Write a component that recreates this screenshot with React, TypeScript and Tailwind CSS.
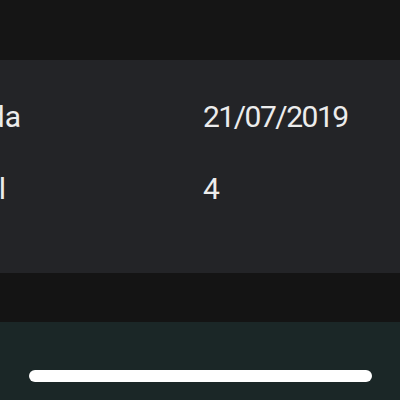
export default function App() {
  const rows = [
    { label: "Salida", value: "21/07/2019" },
    { label: "Total", value: "4" },
  ];

  return (
    <div
      className="w-[400px] h-[400px] overflow-hidden flex flex-col bg-[#141414] text-[#ececec]"
      style={{ fontFamily: "Roboto, 'Open Sans', sans-serif" }}
    >
      <div className="h-[60px] shrink-0 bg-[#151515]" />

      {/* DETAILS PANEL */}
      <div className="h-[213px] shrink-0 bg-[#232427] pt-[20px] overflow-hidden">
        {rows.map((row) => (
          <div key={row.label} className="h-[72px] flex items-center ml-[-61px]">
            <div className="w-[264px] shrink-0 text-[30px] whitespace-nowrap">
              {row.label}
            </div>
            <div className="text-[30px] tracking-[-1.5px] whitespace-nowrap">
              {row.value}
            </div>
          </div>
        ))}
      </div>

      <div className="h-[49px] shrink-0 bg-[#141414]" />

      {/* HOME INDICATOR AREA */}
      <div className="flex-1 bg-[#1b2727] flex justify-center pt-[48px]">
        <div className="w-[343px] h-[12px] rounded-full bg-white" />
      </div>
    </div>
  );
}
